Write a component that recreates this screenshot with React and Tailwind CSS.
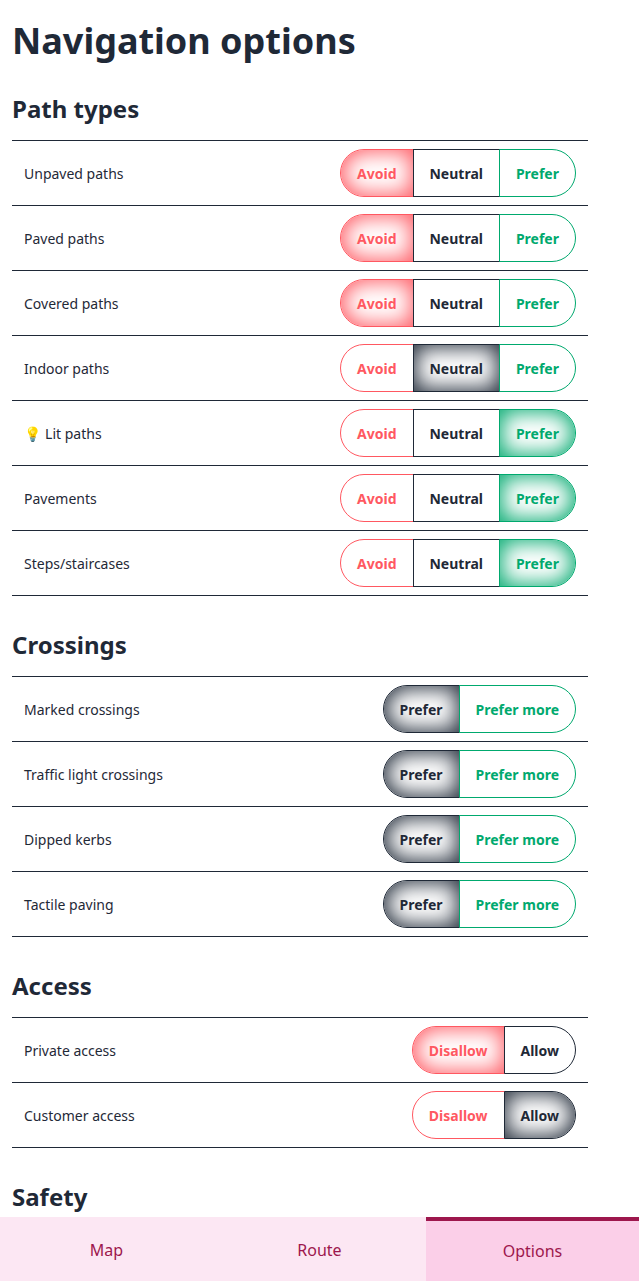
const TONES = {
  red: {
    base: "border-[#ff5861] text-[#ff5861]",
    active: "shadow-[inset_0_0_21px_2px_#ff5861]",
  },
  dark: {
    base: "border-[#1f2937] text-[#1f2937]",
    active: "shadow-[inset_0_0_21px_2px_#1f2937]",
  },
  green: {
    base: "border-[#00a96e] text-[#00a96e]",
    active: "shadow-[inset_0_0_21px_2px_#00a96e]",
  },
};

const PATH_CHOICES = [["Avoid", "red"], ["Neutral", "dark"], ["Prefer", "green"]];
const CROSSING_CHOICES = [["Prefer", "dark"], ["Prefer more", "green"]];
const ACCESS_CHOICES = [["Disallow", "red"], ["Allow", "dark"]];

const SECTIONS = [
  {
    title: "Path types",
    choices: PATH_CHOICES,
    rows: [
      ["Unpaved paths", 0],
      ["Paved paths", 0],
      ["Covered paths", 0],
      ["Indoor paths", 1],
      ["💡 Lit paths", 2],
      ["Pavements", 2],
      ["Steps/staircases", 2],
    ],
  },
  {
    title: "Crossings",
    choices: CROSSING_CHOICES,
    rows: [
      ["Marked crossings", 0],
      ["Traffic light crossings", 0],
      ["Dipped kerbs", 0],
      ["Tactile paving", 0],
    ],
  },
  {
    title: "Access",
    choices: ACCESS_CHOICES,
    rows: [["Private access", 0], ["Customer access", 1]],
  },
  { title: "Safety", choices: [], rows: [] },
];

function Choices({ choices, selected }) {
  return (
    <div className="-mr-[0.3px] flex">
      {choices.map(([label, tone], i) => (
        <button
          key={label}
          className={`-ml-px h-12 border pt-0.5 pr-[16.3px] pl-[15.7px] text-sm leading-[14px] font-bold first:ml-0 first:rounded-l-3xl last:rounded-r-3xl ${TONES[tone].base} ${i === selected ? TONES[tone].active : ""}`}
        >
          {label}
        </button>
      ))}
    </div>
  );
}

function Section({ title, choices, rows }) {
  return (
    <section className="mb-8">
      <h2 className="mb-[14px] text-2xl leading-[34px] font-bold">{title}</h2>
      <div className="border-t border-[#1f2937]">
        {rows.map(([label, selected]) => (
          <div key={label} className="flex h-[65px] items-center justify-between border-b border-[#1f2937] px-3 text-sm">
            <span className="pt-0.5">{label}</span>
            <Choices choices={choices} selected={selected} />
          </div>
        ))}
      </div>
    </section>
  );
}

export default function App() {
  return (
    <div className="flex h-[1281px] flex-col overflow-hidden bg-white font-['Noto_Sans','Noto_Color_Emoji',sans-serif] text-[#1f2937]">
      <main className="min-h-0 w-[600px] flex-1 overflow-hidden px-3 pt-[21px]">
        <h1 className="mb-[31px] text-4xl leading-10 font-bold">Navigation options</h1>
        {SECTIONS.map((section) => (
          <Section key={section.title} {...section} />
        ))}
      </main>
      <nav className="grid h-16 shrink-0 grid-cols-3 bg-[#fce7f3] text-base text-[#9d174d]">
        <button className="pt-0.5">Map</button>
        <button className="pt-0.5">Route</button>
        <button className="border-t-4 border-[#9d174d] bg-[#fbcfe8]">Options</button>
      </nav>
    </div>
  );
}
